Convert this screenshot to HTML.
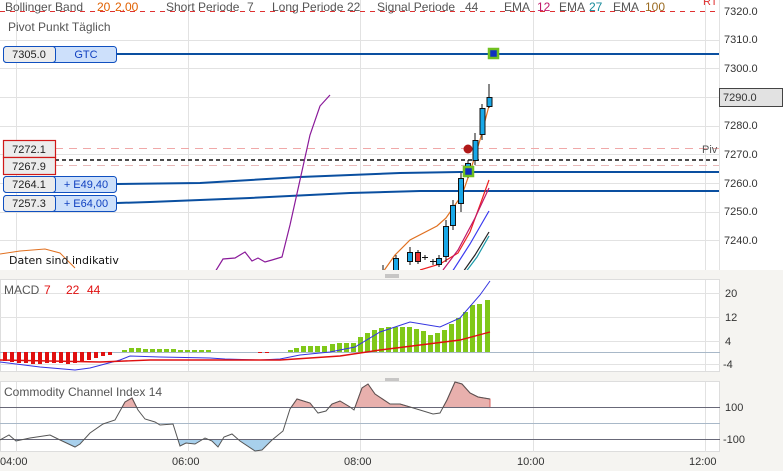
<!DOCTYPE html>
<html><head><meta charset="utf-8"><style>
html,body{margin:0;padding:0;background:#f5f4f1;}
svg{display:block;font-family:"Liberation Sans",Arial,sans-serif;}
</style></head><body>
<svg width="783" height="471" viewBox="0 0 783 471" xmlns="http://www.w3.org/2000/svg">
<defs>
<clipPath id="main"><rect x="0" y="0" width="719" height="270"/></clipPath>
<clipPath id="up"><rect x="0" y="381" width="720" height="26.5"/></clipPath>
<clipPath id="dn"><rect x="0" y="439.5" width="720" height="13"/></clipPath>
</defs>
<rect width="783" height="471" fill="#f5f4f1"/>
<rect x="0" y="0" width="783" height="270" fill="#fff"/>
<g stroke="#e2e2e2" stroke-width="1">
<line x1="16.5" y1="0" x2="16.5" y2="270"/><line x1="188.5" y1="0" x2="188.5" y2="270"/><line x1="360.5" y1="0" x2="360.5" y2="270"/><line x1="533.5" y1="0" x2="533.5" y2="270"/><line x1="705.5" y1="0" x2="705.5" y2="270"/>
<line x1="0" y1="40.5" x2="719" y2="40.5"/><line x1="0" y1="68.5" x2="719" y2="68.5"/><line x1="0" y1="97.5" x2="719" y2="97.5"/><line x1="0" y1="126.5" x2="719" y2="126.5"/><line x1="0" y1="154.5" x2="719" y2="154.5"/><line x1="0" y1="183.5" x2="719" y2="183.5"/><line x1="0" y1="212.5" x2="719" y2="212.5"/><line x1="0" y1="240.5" x2="719" y2="240.5"/>
<line x1="719.5" y1="0" x2="719.5" y2="270"/>
</g>
<line x1="0" y1="11.5" x2="719" y2="11.5" stroke="#e03030" stroke-dasharray="5,5"/>
<g font-size="12" fill="#555">
<text x="5" y="11">Bollinger Band</text><text x="97" y="11" fill="#e06000">20</text><text x="115" y="11" fill="#e06000">2.00</text>
<text x="166" y="11">Short Periode</text><text x="247" y="11">7</text>
<text x="272" y="11">Long Periode</text><text x="347" y="11">22</text>
<text x="377" y="11">Signal Periode</text><text x="465" y="11">44</text>
<text x="504" y="11">EMA</text><text x="537" y="11" fill="#c0186a">12</text>
<text x="559" y="11">EMA</text><text x="589" y="11" fill="#158a9a">27</text>
<text x="613" y="11">EMA</text><text x="645" y="11" fill="#9a6a20">100</text>
<text x="703" y="5" fill="#e03030" font-size="11">RT</text>
<text x="8" y="31" font-size="12">Pivot Punkt  Täglich</text>
</g>
<g clip-path="url(#main)" fill="none">
<line x1="55" y1="148.5" x2="719" y2="148.5" stroke="#f0a8a8" stroke-dasharray="8,6"/>
<line x1="55" y1="165.5" x2="719" y2="165.5" stroke="#e8b8b8" stroke-dasharray="8,6"/>
<line x1="55" y1="160" x2="719" y2="160" stroke="#111" stroke-width="1.5" stroke-dasharray="4,3"/>
<line x1="117" y1="54" x2="719" y2="54" stroke="#0a4fa0" stroke-width="2"/>
<path d="M117 184 L200 183 L300 177 L400 173 L460 172 L719 172" stroke="#0a4fa0" stroke-width="2"/>
<path d="M117 203 L150 202 L250 198 L350 193 L420 191 L719 191" stroke="#0a4fa0" stroke-width="2"/>
<path d="M0 254 L20 251 L45 249 L60 253 L75 268" stroke="#e07020" stroke-width="1"/>
<path d="M215 272 L223 259 L235 258 L245 252 L252 261 L258 258 L265 262 L272 260 L282 257 L290 225 L300 180 L310 135 L320 106 L330 95" stroke="#8a1a9a" stroke-width="1.2"/>
<path d="M383 272 L395 255 L410 240 L437 226 L446 218 L455 205 L462 195 L470 172 L480 140 L490 102" stroke="#e07020" stroke-width="1.2"/>
<path d="M420 270 L440 264 L458 253 L470 232 L480 205 L489 180" stroke="#ee2020" stroke-width="1.2"/>
<path d="M443 270 L458 250 L475 218 L489 188" stroke="#c0186a" stroke-width="1.2"/>
<path d="M452 272 L470 244 L489 211" stroke="#3a3af0" stroke-width="1.2"/>
<path d="M463 272 L475 255 L489 232" stroke="#222" stroke-width="1.2"/>
<path d="M465 273 L477 257 L489 236" stroke="#1a9aa8" stroke-width="1.2"/>
<g stroke="#111" stroke-width="1">
<line x1="383" y1="265" x2="383" y2="270"/>
<line x1="396" y1="255" x2="396" y2="270"/><rect x="393.5" y="258.5" width="5" height="12" fill="#18a8e8"/>
<line x1="410" y1="247" x2="410" y2="265"/><rect x="407.5" y="252.5" width="5" height="9" fill="#18a8e8"/>
<line x1="418" y1="250" x2="418" y2="264"/><rect x="415.5" y="252.5" width="5" height="9" fill="#ee3030"/>
<line x1="422" y1="257.5" x2="428" y2="257.5"/><line x1="425" y1="255" x2="425" y2="260"/>
<line x1="430" y1="261.5" x2="436" y2="261.5"/><line x1="433" y1="259" x2="433" y2="265"/>
<line x1="439" y1="255" x2="439" y2="267"/><rect x="436.5" y="258.5" width="5" height="6" fill="#18a8e8"/>
<line x1="446" y1="220" x2="446" y2="262"/><rect x="443.5" y="226.5" width="5" height="30" fill="#18a8e8"/>
<line x1="453" y1="200" x2="453" y2="230"/><rect x="450.5" y="205.5" width="5" height="20" fill="#18a8e8"/>
<line x1="461" y1="173" x2="461" y2="212"/><rect x="458.5" y="178.5" width="5" height="25" fill="#18a8e8"/>
<line x1="468" y1="160" x2="468" y2="178"/><rect x="465.5" y="163.5" width="5" height="8" fill="#18a8e8"/>
<line x1="475" y1="133" x2="475" y2="165"/><rect x="473" y="140.5" width="5" height="20" fill="#18a8e8"/>
<line x1="482" y1="104" x2="482" y2="140"/><rect x="480" y="108.5" width="5" height="26" fill="#18a8e8"/>
<line x1="489" y1="84" x2="489" y2="108"/><rect x="487" y="97.5" width="5" height="9" fill="#18a8e8"/>
</g>
</g>
<circle cx="468" cy="149" r="4.5" fill="#b01818"/>
<rect x="489" y="49" width="9" height="9" fill="#1030c0" stroke="#70c020" stroke-width="2.5"/>
<rect x="464" y="167" width="9" height="9" fill="#1030c0" stroke="#70c020" stroke-width="2.5"/>
<text x="702" y="153" font-size="11" fill="#555">Piv</text>
<g font-size="11">
<rect x="3.5" y="46.5" width="113" height="16" rx="3" fill="#cde0fb" stroke="#1050c0"/>
<rect x="3.5" y="46.5" width="52" height="16" rx="3" fill="#ececec" stroke="#1050c0"/>
<text x="29" y="58" text-anchor="middle" fill="#222">7305.0</text><text x="86" y="58" text-anchor="middle" fill="#1040c0">GTC</text>
<rect x="3.5" y="140.5" width="52" height="17" fill="#ececec" stroke="#d01818" stroke-width="1.2"/>
<text x="29" y="153" text-anchor="middle" fill="#222">7272.1</text>
<rect x="3.5" y="157.5" width="52" height="17" fill="#ececec" stroke="#d01818" stroke-width="1.2"/>
<text x="29" y="170" text-anchor="middle" fill="#222">7267.9</text>
<rect x="3.5" y="176.5" width="113" height="16" rx="3" fill="#cde0fb" stroke="#1050c0"/>
<rect x="3.5" y="176.5" width="52" height="16" rx="3" fill="#ececec" stroke="#1050c0"/>
<text x="29" y="188" text-anchor="middle" fill="#222">7264.1</text><text x="86" y="188" text-anchor="middle" fill="#1040c0">+ E49,40</text>
<rect x="3.5" y="195.5" width="113" height="16" rx="3" fill="#cde0fb" stroke="#1050c0"/>
<rect x="3.5" y="195.5" width="52" height="16" rx="3" fill="#ececec" stroke="#1050c0"/>
<text x="29" y="207" text-anchor="middle" fill="#222">7257.3</text><text x="86" y="207" text-anchor="middle" fill="#1040c0">+ E64,00</text>
</g>
<text x="9" y="264" font-family="DejaVu Sans, sans-serif" font-size="11" fill="#111">Daten sind indikativ</text>
<g font-size="11" fill="#333">
<text x="724" y="15">7320.0</text><text x="724" y="43">7310.0</text><text x="724" y="72">7300.0</text>
<rect x="719.5" y="88.5" width="63" height="18" fill="#e2e2e2" stroke="#444"/>
<text x="723" y="101">7290.0</text>
<text x="724" y="129">7280.0</text><text x="724" y="158">7270.0</text><text x="724" y="187">7260.0</text><text x="724" y="215">7250.0</text><text x="724" y="244">7240.0</text>
</g>
<g stroke="#999"><line x1="385" y1="275" x2="399" y2="275"/><line x1="385" y1="277" x2="399" y2="277"/><line x1="385" y1="379" x2="399" y2="379"/><line x1="385" y1="381" x2="399" y2="381"/></g>
<rect x="0.5" y="279.5" width="719" height="92" fill="#fff" stroke="#ddd"/>
<g stroke="#e2e2e2">
<line x1="16.5" y1="280" x2="16.5" y2="371"/><line x1="188.5" y1="280" x2="188.5" y2="371"/><line x1="360.5" y1="280" x2="360.5" y2="371"/><line x1="533.5" y1="280" x2="533.5" y2="371"/><line x1="705.5" y1="280" x2="705.5" y2="371"/>
<line x1="0" y1="293.5" x2="720" y2="293.5"/><line x1="0" y1="317.5" x2="720" y2="317.5"/><line x1="0" y1="341.5" x2="720" y2="341.5"/><line x1="0" y1="364.5" x2="720" y2="364.5"/>
</g>
<line x1="0" y1="352.5" x2="720" y2="352.5" stroke="#a8b8c8"/>
<g fill="#e01010">
<rect x="3" y="352" width="4" height="9"/><rect x="10" y="352" width="4" height="10"/><rect x="17" y="352" width="4" height="11"/><rect x="24" y="352" width="4" height="11"/><rect x="31" y="352" width="4" height="12"/><rect x="38" y="352" width="4" height="12"/><rect x="45" y="352" width="4" height="11"/><rect x="52" y="352" width="4" height="11"/><rect x="59" y="352" width="4" height="11"/><rect x="66" y="352" width="4" height="12"/><rect x="73" y="352" width="4" height="11"/><rect x="80" y="352" width="4" height="10"/><rect x="87" y="352" width="4" height="8"/><rect x="94" y="352" width="4" height="6"/><rect x="101" y="352" width="4" height="4"/><rect x="108" y="352" width="4" height="3"/>
<rect x="258" y="352" width="4" height="1"/><rect x="265" y="352" width="4" height="1"/>
</g>
<g fill="#80c818">
<rect x="122" y="350" width="5" height="2"/><rect x="129" y="348" width="5" height="4"/><rect x="136" y="348" width="5" height="4"/><rect x="143" y="349" width="5" height="3"/><rect x="150" y="349" width="5" height="3"/><rect x="157" y="349" width="5" height="3"/><rect x="164" y="349" width="5" height="3"/><rect x="171" y="349" width="5" height="3"/><rect x="178" y="350" width="5" height="2"/><rect x="185" y="350" width="5" height="2"/><rect x="192" y="350" width="5" height="2"/><rect x="199" y="350" width="5" height="2"/><rect x="206" y="350" width="5" height="2"/>
<rect x="288" y="350" width="5" height="2"/><rect x="294" y="348" width="5" height="4"/><rect x="301" y="346" width="5" height="6"/><rect x="308" y="346" width="5" height="6"/><rect x="315" y="346" width="5" height="6"/><rect x="322" y="346" width="5" height="6"/><rect x="330" y="344" width="5" height="8"/><rect x="337" y="343" width="5" height="9"/><rect x="344" y="343" width="5" height="9"/><rect x="351" y="343" width="5" height="9"/><rect x="358" y="337" width="5" height="15"/><rect x="365" y="333" width="5" height="19"/><rect x="372" y="330" width="5" height="22"/><rect x="379" y="328" width="5" height="24"/><rect x="386" y="327" width="5" height="25"/><rect x="393" y="327" width="5" height="25"/><rect x="400" y="327" width="5" height="25"/><rect x="407" y="327" width="5" height="25"/><rect x="414" y="329" width="5" height="23"/><rect x="421" y="331" width="5" height="21"/><rect x="428" y="335" width="5" height="17"/><rect x="435" y="333" width="5" height="19"/><rect x="442" y="330" width="5" height="22"/><rect x="449" y="324" width="5" height="28"/><rect x="456" y="318" width="5" height="34"/><rect x="463" y="312" width="5" height="40"/><rect x="470" y="305" width="5" height="47"/><rect x="477" y="304" width="5" height="48"/><rect x="485" y="300" width="5" height="52"/>
</g>
<path d="M0 362 L40 367 L75 370 L90 368 L120 360 L130 356 L160 357 L210 358 L225 359 L260 360 L280 359 L300 355 L330 352 L355 347 L380 332 L410 322 L440 327 L460 318 L480 295 L490 281" fill="none" stroke="#3434e0" stroke-width="1"/>
<path d="M0 360 L100 362 L150 360 L280 360 L340 356 L380 350 L420 345 L460 340 L490 332" fill="none" stroke="#e01010" stroke-width="1.4"/>
<g font-size="12"><text x="4" y="294" fill="#555">MACD</text><text x="44" y="294" fill="#e01010">7</text><text x="66" y="294" fill="#e01010">22</text><text x="87" y="294" fill="#e01010">44</text></g>
<g font-size="11" fill="#333"><text x="725" y="297">20</text><text x="725" y="321">12</text><text x="725" y="345">4</text><text x="723" y="368">-4</text></g>
<rect x="0.5" y="381.5" width="719" height="70" fill="#fff" stroke="#ddd"/>
<g stroke="#e2e2e2">
<line x1="16.5" y1="382" x2="16.5" y2="452"/><line x1="188.5" y1="382" x2="188.5" y2="452"/><line x1="360.5" y1="382" x2="360.5" y2="452"/><line x1="533.5" y1="382" x2="533.5" y2="452"/><line x1="705.5" y1="382" x2="705.5" y2="452"/>
</g>
<line x1="0" y1="423.5" x2="720" y2="423.5" stroke="#a8b8c8"/>
<g clip-path="url(#up)"><path d="M0 407 L0 440 L9 435 L16 441 L30 438 L50 435 L58 439 L75 447 L80 444 L90 433 L103 424 L115 420 L125 402 L132 398 L138 410 L145 419 L155 422 L160 425 L173 424 L180 446 L186 443 L195 444 L205 438 L212 441 L218 447 L224 437 L232 434 L240 441 L255 451 L262 450 L272 440 L283 431 L290 409 L297 399 L310 403 L318 413 L326 411 L332 404 L340 401 L350 407 L354 410 L362 388 L368 384 L375 394 L390 404 L400 404 L420 410 L433 414 L440 413 L447 400 L455 382 L462 384 L470 393 L478 397 L490 399 L490 407 Z" fill="#e8b0ad"/>
<path d="M290 409 L297 399 L310 403 L318 413 L326 411 L332 404 L340 401 L350 407 L354 410 L362 388 L368 384 L375 394 L390 404 L400 404 L420 410 L433 414 L440 413 L447 400 L455 382 L462 384 L470 393 L478 397 L490 399 L490 407" fill="none" stroke="#d86060"/><path d="M115 420 L125 402 L132 398 L138 410" fill="none" stroke="#d86060"/></g>
<g clip-path="url(#dn)"><path d="M0 439 L0 440 L9 435 L16 441 L30 438 L50 435 L58 439 L75 447 L80 444 L90 433 L103 424 L115 420 L125 402 L132 398 L138 410 L145 419 L155 422 L160 425 L173 424 L180 446 L186 443 L195 444 L205 438 L212 441 L218 447 L224 437 L232 434 L240 441 L255 451 L262 450 L272 440 L283 431 L290 439 Z" fill="#a8d0ec"/></g>
<line x1="0" y1="407.5" x2="720" y2="407.5" stroke="#686878"/>
<line x1="0" y1="439.5" x2="720" y2="439.5" stroke="#686878"/>
<path d="M0 440 L9 435 L16 441 L30 438 L50 435 L58 439 L75 447 L80 444 L90 433 L103 424 L115 420 L125 402 L132 398 L138 410 L145 419 L155 422 L160 425 L173 424 L180 446 L186 443 L195 444 L205 438 L212 441 L218 447 L224 437 L232 434 L240 441 L255 451 L262 450 L272 440 L283 431 L290 409 L297 399 L310 403 L318 413 L326 411 L332 404 L340 401 L350 407 L354 410 L362 388 L368 384 L375 394 L390 404 L400 404 L420 410 L433 414 L440 413 L447 400 L455 382 L462 384 L470 393 L478 397 L490 399" fill="none" stroke="#555" stroke-width="1"/>
<text x="4" y="396" font-size="12" fill="#555">Commodity Channel Index  14</text>
<g font-size="11" fill="#333"><text x="725" y="411">100</text><text x="723" y="443">-100</text>
<text x="0" y="465">04:00</text><text x="172" y="465">06:00</text><text x="344" y="465">08:00</text><text x="517" y="465">10:00</text><text x="689" y="465">12:00</text></g>
</svg>
</body></html>
